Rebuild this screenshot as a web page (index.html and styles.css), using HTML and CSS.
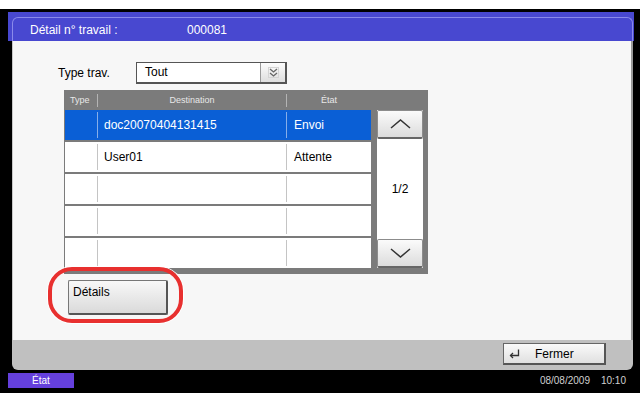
FILE: index.html
```
<!DOCTYPE html>
<html>
    <head>
        <link rel="stylesheet" href="styles.css">
    </head>
    <body>
    <div class="screen">
        <div class="window">
            <div class="titlebar">
                <div class="title">
                    <span class="title-label">Détail n° travail :</span>
                    <span class="title-num">000081</span>
                </div>
            </div>
            <div class="content">
                <div class="filter">
                    <span class="filter-label">Type trav.</span>
                    <div class="select">
                        <span class="select-value">Tout</span>
                        <span class="select-btn">
                            <svg width="11" height="11" viewBox="0 0 11 11"><rect x="0.5" y="0.5" width="10" height="10" fill="none" stroke="#d4d4d4"/><polyline points="2,2 5.5,5 9,2" fill="none" stroke="#666" stroke-width="1.3"/><polyline points="2,6 5.5,9 9,6" fill="none" stroke="#666" stroke-width="1.3"/></svg>
                        </span>
                    </div>
                </div>
                <div class="joblist">
                    <div class="list-head">
                        <span class="h-type">Type</span>
                        <span class="h-dest">Destination</span>
                        <span class="h-state">État</span>
                    </div>
                    <div class="list-body">
                        <div class="rows">
                            <div class="row selected"><span class="cell c-type"></span><span class="cell c-dest">doc20070404131415</span><span class="cell c-state">Envoi</span></div>
                            <div class="row"><span class="cell c-type"></span><span class="cell c-dest">User01</span><span class="cell c-state">Attente</span></div>
                            <div class="row"><span class="cell c-type"></span><span class="cell c-dest"></span><span class="cell c-state"></span></div>
                            <div class="row"><span class="cell c-type"></span><span class="cell c-dest"></span><span class="cell c-state"></span></div>
                            <div class="row"><span class="cell c-type"></span><span class="cell c-dest"></span><span class="cell c-state"></span></div>
                        </div>
                        <div class="scroller">
                            <button class="scroll-btn">
                                <svg width="21" height="10" viewBox="0 0 21 10"><polyline points="1,9 10.5,1 20,9" fill="none" stroke="#333" stroke-width="1.5"/></svg>
                            </button>
                            <div class="page">1/2</div>
                            <button class="scroll-btn">
                                <svg width="21" height="10" viewBox="0 0 21 10"><polyline points="1,1 10.5,9 20,1" fill="none" stroke="#333" stroke-width="1.5"/></svg>
                            </button>
                        </div>
                    </div>
                </div>
                <button class="details">Détails</button>
                <div class="highlight"></div>
            </div>
            <div class="footer">
                <button class="close">
                    <svg width="11" height="10" viewBox="0 0 11 10"><path d="M9.5 0.5 V6.5 H1.5" fill="none" stroke="#333" stroke-width="1.3"/><polyline points="4,4 1.5,6.5 4,9" fill="none" stroke="#333" stroke-width="1.3"/></svg>
                    <span>Fermer</span>
                </button>
            </div>
        </div>
        <div class="statusbar">
            <span class="state">État</span>
            <span class="date">08/08/2009</span>
            <span class="time">10:10</span>
        </div>
    </div>
    </body>
</html>
```
FILE: styles.css
```
body {
    margin: 0;
    background-color: white;
    font-family: "Liberation Sans", Arial, sans-serif;
}
.screen {
    margin-top: 9px;
    height: 384px;
    background-color: black;
    padding: 3px 6px 0 8px;
    box-sizing: border-box;
    display: flex;
    flex-direction: column;
}
.window {
    display: flex;
    flex-direction: column;
}
.titlebar {
    height: 29px;
    background-color: #4848d0;
    padding: 5px 0 0 4px;
    box-sizing: border-box;
}
.title {
    height: 24px;
    margin-right: 1px;
    border: 1px solid #8a8aea;
    border-bottom: none;
    border-radius: 6px 6px 0 0;
    box-sizing: border-box;
    display: flex;
    align-items: center;
    padding: 1px 0 0 17px;
    color: white;
    font-size: 12px;
}
.title-label {
    width: 157px;
}
.content {
    position: relative;
    height: 299px;
    margin: 0 1px 0 4px;
    background-color: #f7f7f7;
    border-left: 1px solid #c8c8c8;
    border-right: 2px solid #9a9a9a;
    padding: 21px 0 0 45px;
    box-sizing: border-box;
}
.filter {
    display: flex;
    align-items: center;
    height: 22px;
}
.filter-label {
    width: 78px;
    font-size: 12px;
}
.select {
    display: flex;
    width: 151px;
    height: 22px;
    border: 1px solid #555;
    border-right-width: 2px;
    border-bottom-width: 2px;
    box-sizing: border-box;
    background-color: white;
}
.select-value {
    flex: 1;
    padding-left: 8px;
    font-size: 12px;
    line-height: 19px;
}
.select-btn {
    width: 24px;
    border-left: 1px solid #999;
    background: linear-gradient(#fcfcfc, #dedede);
    display: flex;
    align-items: center;
    justify-content: center;
}
.joblist {
    width: 364px;
    margin: 6px 0 0 6px;
    background-color: #7b7b7b;
    padding: 0 5px 6px 1px;
    box-sizing: border-box;
}
.list-head {
    display: grid;
    grid-template-columns: 33px 189px 84px;
    height: 20px;
    align-items: center;
    font-size: 9px;
    color: #e8e8e8;
}
.list-head span {
    height: 13px;
    line-height: 13px;
    border-right: 1px solid #b4b4b4;
}
.list-head .h-type {
    padding-left: 5px;
}
.list-head .h-dest {
    text-align: center;
}
.list-head .h-state {
    text-align: center;
    border-right: none;
}
.list-body {
    display: flex;
}
.rows {
    width: 306px;
    display: grid;
    grid-auto-rows: 30px;
    row-gap: 2px;
}
.row {
    display: grid;
    grid-template-columns: 33px 189px 84px;
    background-color: white;
    padding: 2px 0;
    font-size: 12px;
}
.cell {
    display: flex;
    align-items: center;
    border-right: 1px solid #c4c4c4;
}
.c-dest {
    padding-left: 6px;
}
.c-state {
    padding-left: 7px;
    border-right: none;
}
.row.selected {
    background-color: #0a5fd6;
    color: white;
}
.row.selected .cell {
    border-color: #86aee9;
}
.scroller {
    width: 46px;
    margin-left: 6px;
    display: flex;
    flex-direction: column;
    background-color: white;
}
.scroll-btn {
    height: 29px;
    padding: 0;
    border: 1px solid #8c8c8c;
    border-bottom: 2px solid #666;
    border-radius: 2px;
    background: linear-gradient(#fbfbfb, #dcdcdc);
    display: flex;
    align-items: center;
    justify-content: center;
}
.page {
    flex: 1;
    display: flex;
    align-items: center;
    justify-content: center;
    font-size: 12px;
}
.details {
    display: flex;
    align-items: flex-start;
    width: 100px;
    height: 35px;
    margin: 6px 0 0 10px;
    padding: 4px 0 0 4px;
    border: 1px solid #777;
    border-right: 2px solid #555;
    border-bottom: 2px solid #555;
    border-radius: 2px;
    box-sizing: border-box;
    background: linear-gradient(#f8f8f8, #dadada);
    font-family: "Liberation Sans", Arial, sans-serif;
    font-size: 12px;
    color: black;
}
.highlight {
    position: absolute;
    left: 35px;
    top: 226px;
    width: 135px;
    height: 56px;
    border: 4px solid #e8302f;
    border-radius: 24px;
    box-sizing: border-box;
    box-shadow: 0 0 0 1px white;
}
.footer {
    height: 30px;
    margin: 0 1px 0 4px;
    background-color: #c0c0c0;
    border-radius: 0 0 6px 6px;
    display: flex;
    justify-content: flex-end;
    align-items: flex-start;
    padding: 3px 27px 0 0;
    box-sizing: border-box;
}
.close {
    display: flex;
    align-items: center;
    width: 103px;
    height: 22px;
    padding: 0 0 0 5px;
    border: 1px solid #666;
    border-right: 2px solid #555;
    border-bottom: 2px solid #555;
    box-sizing: border-box;
    background: linear-gradient(#fafafa, #e0e0e0);
    font-family: "Liberation Sans", Arial, sans-serif;
    font-size: 12px;
    color: black;
}
.close svg {
    margin-right: 15px;
}
.statusbar {
    height: 23px;
    display: flex;
    align-items: flex-start;
    padding: 3px 8px 0 0;
    box-sizing: border-box;
    font-size: 10px;
    line-height: 15px;
}
.state {
    width: 66px;
    height: 15px;
    background-color: #6540dc;
    color: white;
    text-align: center;
}
.date {
    margin-left: auto;
    color: #d0d0d0;
}
.time {
    margin-left: 11px;
    color: #d0d0d0;
}
```
